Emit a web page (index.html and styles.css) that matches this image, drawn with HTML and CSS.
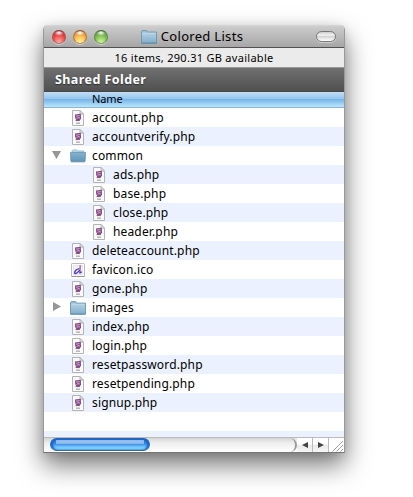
FILE: index.html
```
<!DOCTYPE html>
<html lang="en">
<head>
<meta charset="utf-8">
<title>Colored Lists</title>
<link rel="stylesheet" href="styles.css">
</head>
<body>
<svg class="defs" aria-hidden="true">
  <defs>
    <linearGradient id="folderFill" x1="0" y1="0" x2="0" y2="1"><stop offset="0" stop-color="#b3d1e3"/><stop offset="1" stop-color="#82afcc"/></linearGradient>
    <linearGradient id="openFill" x1="0" y1="0" x2="0" y2="1"><stop offset="0" stop-color="#86b4d0"/><stop offset="1" stop-color="#5f97b9"/></linearGradient>
    <symbol id="folder" viewBox="0 0 16 14">
      <path d="M.5 13V2L1.2.6H5.6L6.6 2.1H15.5V13Z" fill="#9cc3db" stroke="#6795b2" stroke-width=".9"/>
      <path d="M1 3H15V12.5H1Z" fill="url(#folderFill)"/>
      <path d="M1 3.2H15" stroke="#c8e0ed" stroke-width=".7"/>
      <path d="M.3 13.1H15.7" stroke="#5586a4" stroke-width="1"/>
    </symbol>
    <symbol id="folder-open" viewBox="0 0 16 14">
      <path d="M2.2 5V1.5L2.8.9H6.6L7.4 1.9H13.6V5Z" fill="#bdd8e7" stroke="#8fb5cc" stroke-width=".8"/>
      <path d="M.5 3.4H15.5L15.1 12.2H.9Z" fill="url(#openFill)" stroke="#5f91af" stroke-width=".8"/>
      <path d="M1 12.9H15" stroke="#4b6c80" stroke-opacity=".65" stroke-width="1"/>
    </symbol>
    <symbol id="php" viewBox="0 0 12 16">
      <path d="M.5 .5H8L11.5 4.2V15.5H.5Z" fill="#fafafa" stroke="#b4b4b4"/>
      <path d="M8 .5V4.2H11.5Z" fill="#e2e2e2" stroke="#a8a8a8" stroke-width=".7"/>
      <path d="M3 4.4L8.8 3.8L9 8.5L8 10.3L4.5 10.6L3.2 8Z" fill="#854884"/>
      <path d="M4 6.2L7.7 5.6M4.5 8.5L6 7.6L8 8" stroke="#d6b8d6" stroke-width=".9" fill="none"/>
      <path d="M3.6 10.6H7.8" stroke="#6b3066" stroke-width=".8"/>
      <path d="M4 13.2H8" stroke="#aaa" stroke-width="1.3"/>
    </symbol>
    <symbol id="ico" viewBox="0 0 14 14">
      <rect x=".5" y=".5" width="13" height="13" rx=".7" fill="#fff" stroke="#bbb"/>
      <path d="M.5 13.4H13.5" stroke="#959595"/>
      <path d="M2.5 11.4V2.5H11.5V11.4Z" fill="#f4f2fa" stroke="#dedbe5" stroke-width=".7"/>
      <path d="M9.2 2.3L8.9 10.8" stroke="#b06aa7" stroke-width="1.5"/>
      <path d="M8.3 5.9C5.4 5.5 3 9 3.8 10.3C4.8 11.4 7.4 9 8.6 7M8.7 9.6L10.8 9" stroke="#493bbd" stroke-width="1.4" fill="none"/>
    </symbol>
  </defs>
</svg>
<main class="window">
  <header class="titlebar">
    <div class="lights"><i class="light red"></i><i class="light amber"></i><i class="light green"></i></div>
    <div class="title"><svg class="folder"><use href="#folder"/></svg><span>Colored Lists</span></div>
    <i class="pill"></i>
  </header>
  <div class="status"><span>16 items, 290.31 GB available</span></div>
  <div class="banner">Shared Folder</div>
  <div class="column">Name</div>
  <ul class="files">
    <li><svg class="php"><use href="#php"/></svg><span>account.php</span></li>
    <li><svg class="php"><use href="#php"/></svg><span>accountverify.php</span></li>
    <li class="dir"><i class="arrow down"></i><svg class="folder"><use href="#folder-open"/></svg><span>common</span></li>
    <li class="child"><svg class="php"><use href="#php"/></svg><span>ads.php</span></li>
    <li class="child"><svg class="php"><use href="#php"/></svg><span>base.php</span></li>
    <li class="child"><svg class="php"><use href="#php"/></svg><span>close.php</span></li>
    <li class="child"><svg class="php"><use href="#php"/></svg><span>header.php</span></li>
    <li><svg class="php"><use href="#php"/></svg><span>deleteaccount.php</span></li>
    <li><svg class="ico"><use href="#ico"/></svg><span>favicon.ico</span></li>
    <li><svg class="php"><use href="#php"/></svg><span>gone.php</span></li>
    <li class="dir"><i class="arrow right"></i><svg class="folder"><use href="#folder"/></svg><span>images</span></li>
    <li><svg class="php"><use href="#php"/></svg><span>index.php</span></li>
    <li><svg class="php"><use href="#php"/></svg><span>login.php</span></li>
    <li><svg class="php"><use href="#php"/></svg><span>resetpassword.php</span></li>
    <li><svg class="php"><use href="#php"/></svg><span>resetpending.php</span></li>
    <li><svg class="php"><use href="#php"/></svg><span>signup.php</span></li>
  </ul>
  <footer class="scrollbar">
    <div class="track"><div class="thumb"></div></div>
    <div class="step"><svg width="6" height="6" viewBox="0 0 6 6"><path d="M6 0V6L0 3Z" fill="#444"/></svg></div>
    <div class="step"><svg width="6" height="6" viewBox="0 0 6 6"><path d="M0 0V6L6 3Z" fill="#444"/></svg></div>
    <div class="grip"><svg width="12" height="12" viewBox="0 0 12 12"><path d="M.5 11.5L11 1M4.5 11.5L11 5M8.5 11.5L11 9" stroke="#999" stroke-width=".9"/></svg></div>
  </footer>
</main>
</body>
</html>
```
FILE: styles.css
```
* { box-sizing: border-box; }
body {
  margin: 0;
  height: 497px;
  padding: 25px 0 0 43px;
  overflow: hidden;
  background: #fff;
  color: #000;
  font: 12px/19px "Noto Sans", "Open Sans", sans-serif;
}
.defs { position: absolute; width: 0; height: 0; }
.window {
  width: 302px;
  height: 428px;
  border: 1px solid #999;
  border-top: 0;
  border-bottom-color: #777;
  border-radius: 5px 5px 0 0;
  background: #fff;
  display: flex;
  flex-direction: column;
  box-shadow: 0 12px 26px rgba(0,0,0,.54), 0 2px 10px rgba(0,0,0,.1);
}
.titlebar {
  height: 23px;
  flex: none;
  display: grid;
  grid-template-columns: 60px 1fr 60px;
  align-items: center;
  padding: 1px 8px 0;
  border-bottom: 1px solid #515151;
  border-radius: 4px 4px 0 0;
  background: linear-gradient(#d7d7d7, #cbcbcb 2px, #a6a6a6);
}
.lights { display: flex; gap: 7px; }
.light {
  width: 14px;
  height: 14px;
  border-radius: 50%;
  border: 1px solid;
  box-shadow: 0 1px 0 rgba(255,255,255,.45);
}
.red { border-color: #8c3434 #b64b49 #bb7775; background: radial-gradient(ellipse 5px 3px at 50% 15%, #fff 0, transparent 100%), radial-gradient(circle at 50% 90%, #ffaaa3, #f0605c 40%, #c92a31 80%); }
.amber { border-color: #955427 #ba7438 #b69362; background: radial-gradient(ellipse 5px 3px at 50% 15%, #fff 0, transparent 100%), radial-gradient(circle at 50% 90%, #fff39b, #f5c153 45%, #db8636 80%); }
.green { border-color: #3e6d2c #5e8d42 #879e70; background: radial-gradient(ellipse 5px 3px at 50% 15%, #fff 0, transparent 100%), radial-gradient(circle at 50% 90%, #cef69d, #8bc75b 45%, #559839 80%); }
.title {
  display: flex;
  align-items: center;
  justify-content: center;
  gap: 4px;
  font-size: 13px;
  letter-spacing: .3px;
  white-space: nowrap;
  padding-right: 4px;
}
.folder { width: 16px; height: 14px; flex: none; }
.pill {
  justify-self: end;
  width: 20px;
  height: 11px;
  border: 1.5px solid #787878;
  border-radius: 6px;
  background: linear-gradient(#ccc, #f4f4f4 35%, #d5d5d5 50%, #fff);
  box-shadow: 0 1px 0 rgba(255,255,255,.4);
}
.status {
  height: 20px;
  flex: none;
  border-bottom: 1px solid #999;
  background: #ebebeb;
  text-align: center;
  font-size: 11px;
  letter-spacing: .29px;
  line-height: 20px;
}
.banner {
  height: 24px;
  flex: none;
  padding-left: 11px;
  border-bottom: 1px solid #454545;
  background: linear-gradient(#707070, #505050);
  color: #fff;
  font-size: 12.5px;
  letter-spacing: .43px;
  font-weight: 700;
  line-height: 23px;
  text-shadow: 0 1px 1px rgba(0,0,0,.5);
}
.column {
  height: 16px;
  flex: none;
  padding-left: 48px;
  border-bottom: 1px solid #8cb3d3;
  background: linear-gradient(#c2dff5, #94c6ef 45%, #79b5e8 50%, #b9e7ff);
  font-size: 11px;
  letter-spacing: -.1px;
  line-height: 14px;
}
.files {
  flex: 1;
  min-height: 0;
  margin: 0;
  padding: 0;
  list-style: none;
  letter-spacing: .15px;
  background: repeating-linear-gradient(#fff 0 19px, #ebf1ff 19px 38px);
}
.files li { height: 19px; display: flex; align-items: center; padding-left: 28px; white-space: nowrap; }
.files .child { padding-left: 49px; }
.files .dir { padding-left: 8px; }
.php { width: 12px; height: 16px; margin-right: 8px; flex: none; }
.ico { width: 14px; height: 14px; margin: 0 7px 0 -1px; flex: none; }
.files .folder { margin: 0 6px 0 4px; }
.arrow { width: 14px; height: 10px; flex: none; background: #969696; }
.dir .arrow { width: 9px; height: 8px; margin: 0 5px 1px 0; }
.down { clip-path: polygon(0 0, 100% 0, 50% 100%); }
.dir .right { margin: 0 4px 2px 1px; height: 9px; clip-path: polygon(0 0, 90% 50%, 0 100%); }
.scrollbar {
  height: 15px;
  flex: none;
  display: flex;
  border-top: 1px solid #bbb;
  background: linear-gradient(#e2e2e2, #f7f7f7 45%, #fff);
}
.track {
  width: 253px;
  padding-left: 6px;
  border-right: 2px solid #999;
  border-radius: 0 8px 8px 0;
  background: linear-gradient(#d5d5d5, #eee 35%, #fff);
}
.thumb {
  width: 100px;
  height: 13px;
  border: 1px solid #2366b7;
  border-bottom-color: #446b8b;
  border-radius: 7px;
  background:
    linear-gradient(#a5c8ef, #82b6ee) center 1px / 88px 4px no-repeat,
    linear-gradient(#2469c8, #3f91e5 48%, #66b9fa 65%, #99ecff);
  box-shadow: inset 2px 0 2px #1465cd, inset -2px 0 2px #1465cd;
}
.step { width: 16px; display: grid; place-items: center; border-right: 1px solid #bbb; background: linear-gradient(#fff 45%, #e9e9e9 50%, #f8f8f8); }
.grip { flex: 1; display: grid; place-items: end; background: #fff; }
```
